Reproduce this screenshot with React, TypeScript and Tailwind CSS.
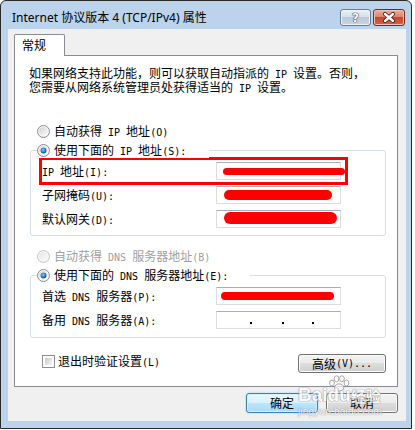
import React from "react";

// 宋体的半角字符是 6px 等宽，这里用 DejaVu Sans Mono 10px 来近似
function Txt({ s }: { s: string }) {
  const parts = s.split(/([\x20-\x7e]+)/);
  return (
    <>
      {parts.map((p, i) =>
        !p ? null : /^[\x20-\x7e]+$/.test(p) ? (
          <span key={i} className="whitespace-pre font-['DejaVu_Sans_Mono',monospace] text-[10px] leading-none">
            {p}
          </span>
        ) : (
          <span key={i}>{p}</span>
        )
      )}
    </>
  );
}

function Radio({ checked, disabled }: { checked?: boolean; disabled?: boolean }) {
  return (
    <svg width="13" height="13" viewBox="0 0 13 13" className="shrink-0">
      <defs>
        <linearGradient id="rin" x1="0" y1="0" x2="1" y2="1">
          <stop offset="0" stopColor="#cfcfcf" />
          <stop offset="1" stopColor="#ffffff" />
        </linearGradient>
        <linearGradient id="rin-d" x1="0" y1="0" x2="1" y2="1">
          <stop offset="0" stopColor="#e6e6e6" />
          <stop offset="1" stopColor="#fbfbfb" />
        </linearGradient>
        <radialGradient id="rdot" cx="0.45" cy="0.4" r="0.6">
          <stop offset="0" stopColor="#8fd0ff" />
          <stop offset="0.6" stopColor="#2a7cc8" />
          <stop offset="1" stopColor="#16477a" />
        </radialGradient>
      </defs>
      <circle cx="6.5" cy="6.5" r="6" fill="#f6f6f6" stroke={disabled ? "#c4c4c4" : "#8a8a8a"} />
      <circle cx="6.5" cy="6.5" r="4.5" fill={disabled ? "url(#rin-d)" : "url(#rin)"} />
      {checked && (
        <>
          <circle cx="6.5" cy="6.5" r="3.6" fill="#ffffff" />
          <circle cx="6.5" cy="6.5" r="3" fill="url(#rdot)" />
        </>
      )}
    </svg>
  );
}

function RadioRow({
  label,
  checked,
  disabled,
  className = "",
}: {
  label: string;
  checked?: boolean;
  disabled?: boolean;
  className?: string;
}) {
  return (
    <div className={`flex h-[16px] items-center gap-[4px] ${className}`}>
      <Radio checked={checked} disabled={disabled} />
      <span className={`whitespace-nowrap ${disabled ? "text-[#a0a0a0]" : "text-black"}`}>
        <Txt s={label} />
      </span>
    </div>
  );
}

function Field({ label, children }: { label: string; children?: React.ReactNode }) {
  return (
    <div className="flex h-[18px] items-center pl-[11px]">
      <span className="w-[174px] whitespace-nowrap">
        <Txt s={label} />
      </span>
      <div className="relative h-[18px] w-[125px] border border-[#dadde3] border-t-[#abadb3] bg-white">
        {children}
      </div>
    </div>
  );
}

function Btn({
  children,
  def,
  className = "",
}: {
  children: React.ReactNode;
  def?: boolean;
  className?: string;
}) {
  return (
    <div
      className={`flex items-center justify-center rounded-[3px] border text-[12px] leading-[14px] text-black ${
        def
          ? "border-[#3c7fb1] bg-[linear-gradient(#eaf6fd,#d9f0fc_50%,#bee6fd_50%,#a7d9f5)] shadow-[inset_0_0_0_1px_#d4f0fd,0_0_2px_#7fd0f5]"
          : "border-[#707070] bg-[linear-gradient(#f2f2f2,#ebebeb_50%,#dddddd_50%,#cfcfcf)] shadow-[inset_0_0_0_1px_#fcfcfc]"
      } ${className}`}
    >
      {children}
    </div>
  );
}

export default function App() {
  return (
    <div className="relative h-[430px] w-[415px] bg-white font-['Noto_Sans_CJK_SC',sans-serif] text-[12px] leading-[14px]">
      <div className="flex h-[429px] w-[412px] flex-col rounded-t-[6px] border border-[#2a2a2a] bg-[#bcd3ec]">
        {/* 标题栏 */}
        <div className="flex h-[28px] shrink-0 items-start pl-[11px] pr-[6px]">
          <span className="mt-[10px] whitespace-nowrap font-['Noto_Sans','Noto_Sans_CJK_SC',sans-serif] text-[12px] leading-[14px] text-black">
            Internet 协议版本 4 (TCP/IPv4) 属性
          </span>
          <div className="ml-auto mt-[8px] flex gap-[2px]">
            <div className="flex h-[17px] w-[31px] items-center justify-center rounded-[3px] border border-[#6a7b92] bg-[linear-gradient(#e9eff6,#d5e0ec_45%,#b9c9dc_50%,#c9d6e5)] shadow-[inset_0_0_0_1px_#eef3f8]">
              <span className="font-['DejaVu_Sans',sans-serif] text-[12px] font-bold leading-[12px] text-white [text-shadow:0_0_1px_#2b3a4f,0_0_1px_#2b3a4f,0_0_1px_#2b3a4f]">
                ?
              </span>
            </div>
            <div className="flex h-[17px] w-[32px] items-center justify-center rounded-[3px] border border-[#7a2a1a] bg-[linear-gradient(#eab0a3,#dc8470_45%,#c8472b_50%,#d4643f)] shadow-[inset_0_0_0_1px_#efc0b4]">
              <svg width="14" height="11" viewBox="0 0 14 11">
                <path d="M3 2 L11 9 M11 2 L3 9" stroke="#4a1a10" strokeWidth="4" strokeLinecap="round" />
                <path d="M3 2 L11 9 M11 2 L3 9" stroke="#ffffff" strokeWidth="2.4" strokeLinecap="round" />
              </svg>
            </div>
          </div>
        </div>

        {/* 客户区 */}
        <div className="ml-[7px] mr-[5px] flex h-[392px] shrink-0 flex-col bg-[#f0f0f0]">
          <div className="flex pl-[6px] pt-[5px]">
            <div className="relative z-10 -mb-px h-[22px] w-[51px] rounded-t-[2px] border border-b-0 border-[#898c95] bg-white pl-[7px] pt-[3px]">
              常规
            </div>
          </div>

          <div className="ml-[6px] flex h-[332px] w-[384px] flex-col border border-[#898c95] bg-white">
            <div className="ml-[14px] mt-[10px] whitespace-nowrap">
              <div>
                <Txt s="如果网络支持此功能，则可以获取自动指派的 IP 设置。否则，" />
              </div>
              <div>
                <Txt s="您需要从网络系统管理员处获得适当的 IP 设置。" />
              </div>
            </div>

            <RadioRow className="ml-[22px] mt-[29px]" label="自动获得 IP 地址(O)" />
            <RadioRow
              checked
              className="relative z-10 ml-[22px] mt-[3px] w-[172px] bg-white"
              label="使用下面的 IP 地址(S):"
            />
            <div className="relative -mt-[8px] ml-[15px] flex h-[86px] w-[356px] flex-col gap-[6px] rounded-[3px] border border-[#d5dfe5] pt-[11px]">
              <Field label="IP 地址(I):">
                <span className="absolute left-[6px] top-[5px] h-[7px] w-[122px] rounded-full bg-[#ff0000]" />
              </Field>
              <Field label="子网掩码(U):">
                <span className="absolute left-[7px] top-[3px] h-[10px] w-[108px] rounded-full bg-[#ff0000]" />
              </Field>
              <Field label="默认网关(D):">
                <span className="absolute left-[7px] top-[1px] h-[12px] w-[113px] rounded-full bg-[#ff0000]" />
              </Field>
              {/* 红色标注框 */}
              <div className="absolute left-[8px] top-[6px] h-[28px] w-[309px] border-[3px] border-[#ff0000]" />
            </div>

            <RadioRow disabled className="ml-[22px] mt-[12px]" label="自动获得 DNS 服务器地址(B)" />
            <RadioRow
              checked
              className="relative z-10 ml-[22px] mt-[3px] w-[213px] bg-white"
              label="使用下面的 DNS 服务器地址(E):"
            />
            <div className="-mt-[8px] ml-[15px] flex h-[63px] w-[356px] flex-col gap-[6px] rounded-[3px] border border-[#d5dfe5] pt-[11px]">
              <Field label="首选 DNS 服务器(P):">
                <span className="absolute left-[4px] top-[4px] h-[8px] w-[113px] rounded-full bg-[#ff0000]" />
              </Field>
              <Field label="备用 DNS 服务器(A):">
                <div className="flex h-full items-end pb-[4px] pl-[33px]">
                  <span className="h-[2px] w-[2px] bg-black" />
                  <span className="ml-[30px] h-[2px] w-[2px] bg-black" />
                  <span className="ml-[28px] h-[2px] w-[2px] bg-black" />
                </div>
              </Field>
            </div>

            <div className="ml-[15px] mt-[15px] flex w-[356px] items-start">
              <div className="flex h-[16px] items-center gap-[3px] pl-[12px]">
                <div className="h-[13px] w-[13px] border border-[#8e8f8f] bg-white p-[2px]">
                  <div className="h-full w-full bg-[linear-gradient(135deg,#cbcbcb,#f6f6f6)]" />
                </div>
                <span className="whitespace-nowrap">
                  <Txt s="退出时验证设置(L)" />
                </span>
              </div>
              <Btn className="ml-auto mt-[1px] h-[19px] w-[88px]">
                <Txt s="高级(V)..." />
              </Btn>
            </div>
          </div>

          <div className="ml-[6px] mt-[6px] flex w-[384px] justify-end gap-[8px]">
            <Btn def className="h-[20px] w-[72px]">
              确定
            </Btn>
            <Btn className="h-[20px] w-[72px]">取消</Btn>
          </div>
        </div>
      </div>

      {/* 百度经验水印 */}
      <div className="pointer-events-none absolute left-[298px] top-[375px] flex flex-col items-start opacity-75">
        <div className="flex items-end text-white [text-shadow:0_0_1px_#808080,0_0_1px_#808080,0_0_1px_#808080]">
          <span className="font-['Liberation_Sans',sans-serif] text-[19px] font-bold leading-[22px]">Bai</span>
          <span className="flex flex-col items-center">
            <svg width="22" height="17" viewBox="0 0 22 17" className="-mb-[8px]">
              <g fill="#ffffff" stroke="#8c8c8c" strokeWidth="1">
                <ellipse cx="4" cy="8" rx="2.4" ry="3" />
                <ellipse cx="8.5" cy="3.8" rx="2.4" ry="3" />
                <ellipse cx="14" cy="3.8" rx="2.4" ry="3" />
                <ellipse cx="18.5" cy="8" rx="2.4" ry="3" />
                <ellipse cx="11.2" cy="12.5" rx="4.6" ry="3.6" />
              </g>
            </svg>
            <span className="font-['Liberation_Sans',sans-serif] text-[19px] font-bold leading-[22px]">du</span>
          </span>
          <span className="font-['Noto_Sans_CJK_SC',sans-serif] text-[15px] font-bold leading-[20px]">经验</span>
        </div>
        <div className="font-['Liberation_Sans',sans-serif] text-[10px] leading-[11px] tracking-[0.2px] text-white [text-shadow:0_0_1px_#808080,0_0_1px_#808080]">
          jingyan.baidu.com
        </div>
      </div>
    </div>
  );
}
